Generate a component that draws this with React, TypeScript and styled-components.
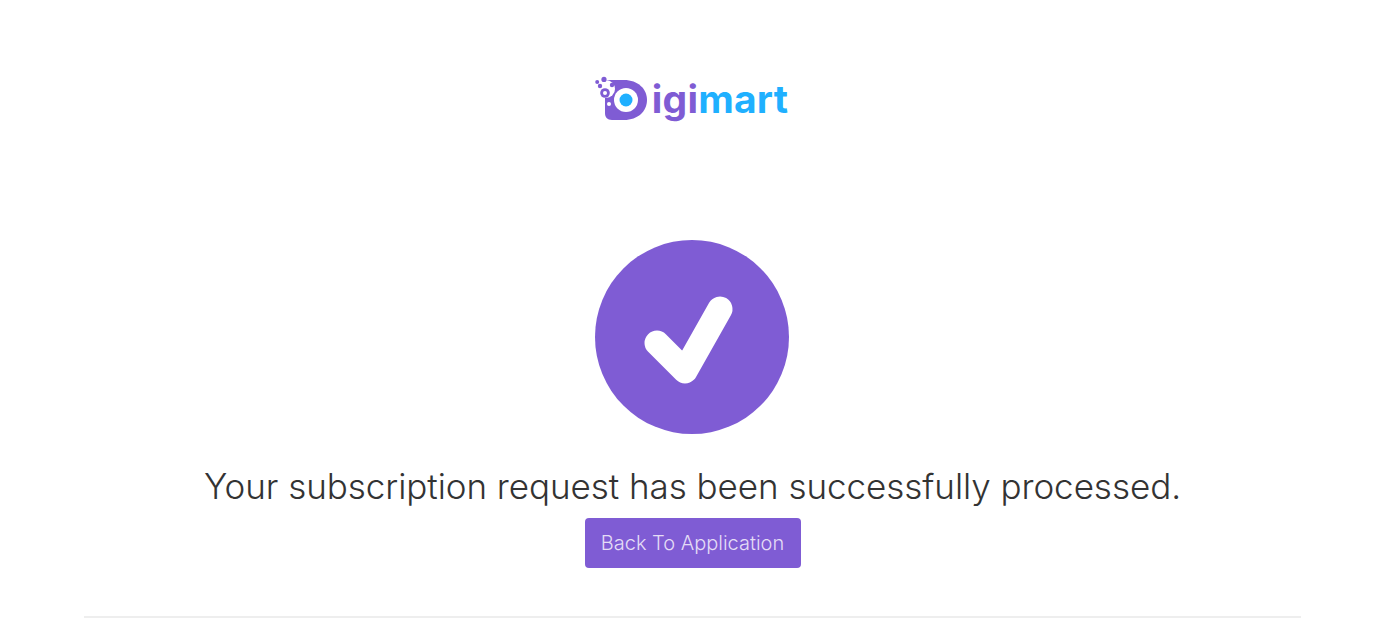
import React from "react";
import styled, { createGlobalStyle } from "styled-components";

const GlobalStyle = createGlobalStyle`
  body {
    margin: 0;
    background: #ffffff;
    font-family: "Inter", "Liberation Sans", sans-serif;
  }
`;

const Logo = () => {
  return (
    <LogoRow>
      <LogoMark width="58" height="46" viewBox="0 0 58 46" aria-hidden="true">
        <path
          d="M11 4H30C44 4 53 13 53 24C53 35 44 44 30 44H18C13 44 11 41 11 37Z"
          fill="#7f5cd4"
        />
        <circle cx="12" cy="13" r="9" fill="#ffffff" />
        <circle cx="32" cy="24" r="12" fill="#ffffff" />
        <circle cx="32" cy="24" r="6.5" fill="#1fb0ff" />
        <circle cx="15" cy="28" r="2" fill="#ffffff" />
        <circle cx="11" cy="17" r="4.8" fill="#7f5cd4" />
        <circle cx="11" cy="17" r="2" fill="#ffffff" />
        <circle cx="6" cy="10" r="2.2" fill="#7f5cd4" />
        <circle cx="10" cy="3.4" r="2.6" fill="#7f5cd4" />
        <circle cx="3.2" cy="6" r="2" fill="#7f5cd4" />
        <circle cx="18" cy="9" r="2.2" fill="#7f5cd4" />
      </LogoMark>
      <LogoText>
        igi<LogoAccent>mart</LogoAccent>
      </LogoText>
    </LogoRow>
  );
};

const App = () => {
  return (
    <Page>
      <GlobalStyle />
      <Logo />
      <SuccessIcon width="194" height="194" viewBox="0 0 194 194" role="img" aria-label="Success">
        <circle cx="97" cy="97" r="97" fill="#7f5cd4" />
        <path
          d="M62 103L90 131L125 69"
          fill="none"
          stroke="#ffffff"
          strokeWidth="25"
          strokeLinecap="round"
          strokeLinejoin="round"
        />
      </SuccessIcon>
      <Message>Your subscription request has been successfully processed.</Message>
      <BackButton href="#">Back To Application</BackButton>
      <Divider />
    </Page>
  );
};

const Page = styled.main`
  width: 1217px;
  margin: 0 0 0 84px;
  padding-top: 76px;
  display: flex;
  flex-direction: column;
  align-items: center;
`;

const LogoRow = styled.div`
  display: flex;
  align-items: flex-start;
  height: 46px;
  margin-right: 3px;
`;

const LogoMark = styled.svg`
  display: block;
  flex: none;
`;

const LogoText = styled.span`
  margin-top: -2px;
  font-family: "Inter", "Liberation Sans", sans-serif;
  font-size: 39px;
  font-weight: 700;
  line-height: 50px;
  letter-spacing: 0.2px;
  color: #7f5cd4;
`;

const LogoAccent = styled.span`
  color: #1fb0ff;
`;

const SuccessIcon = styled.svg`
  display: block;
  margin: 118px 2px 0 0;
`;

const Message = styled.h1`
  margin: 29px 0 0;
  font-size: 35px;
  font-weight: 300;
  line-height: 46px;
  letter-spacing: -0.05px;
  color: #333333;
  white-space: nowrap;
`;

const BackButton = styled.a`
  box-sizing: border-box;
  width: 216px;
  height: 50px;
  margin-top: 9px;
  display: flex;
  align-items: center;
  justify-content: center;
  border-radius: 4px;
  background: #7f5cd4;
  color: #e4dcf6;
  font-size: 20px;
  font-weight: 300;
  text-decoration: none;
`;

const Divider = styled.hr`
  width: 100%;
  height: 2px;
  margin: 48px 0 0;
  border: 0;
  background: #eeeeee;
`;

export default App;
